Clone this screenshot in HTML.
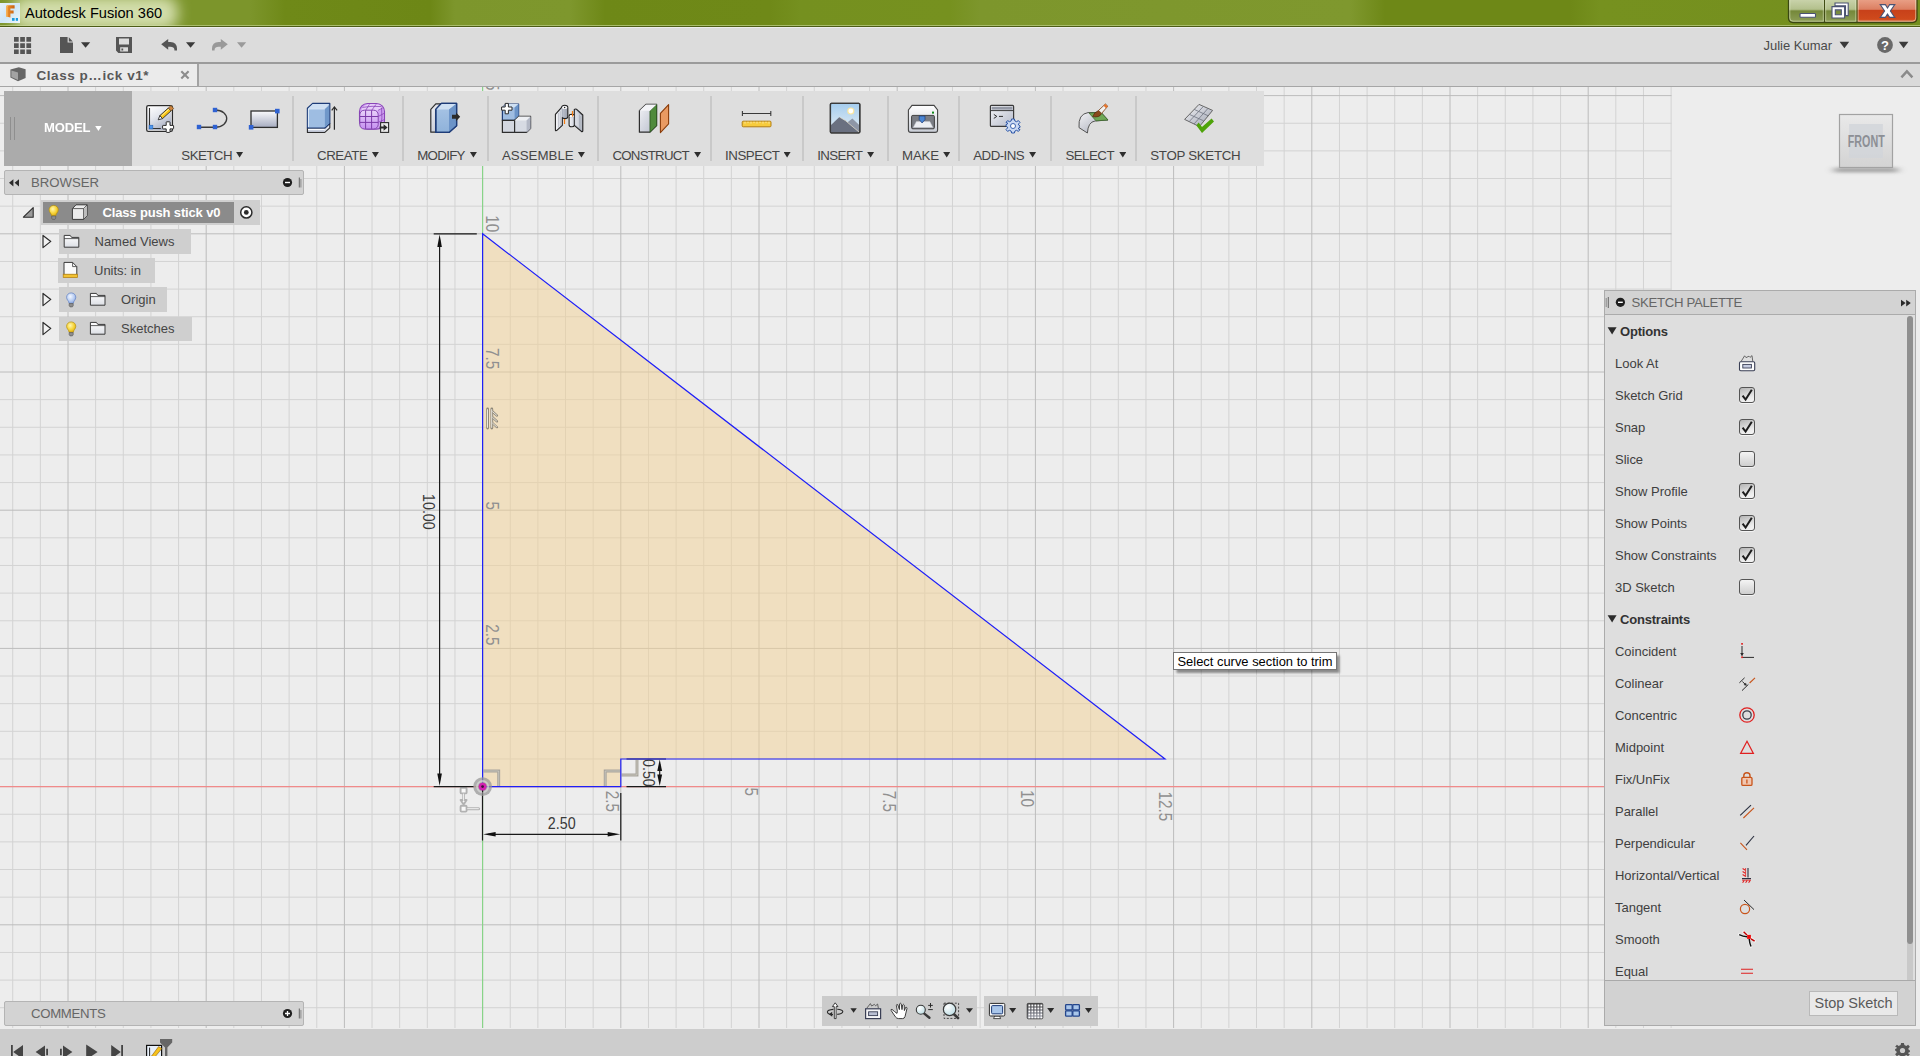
<!DOCTYPE html>
<html lang="en">
<head>
<meta charset="utf-8">
<title>Autodesk Fusion 360</title>
<style>
*{box-sizing:border-box;margin:0;padding:0}
html,body{width:1920px;height:1056px;overflow:hidden;background:#ededed;font-family:"Liberation Sans",Arial,sans-serif;color:#444}
.abs{position:absolute}
#root{position:relative;width:1920px;height:1056px;overflow:hidden}
/* title bar */
#titlebar{left:0;top:0;width:1920px;height:27px;background:#75901d;border-bottom:1px solid #4c5c16;overflow:hidden}
#titlebar .shade{left:0;top:0;width:1920px;height:26px;border-bottom:1px solid #a9bd6c;
 background:linear-gradient(90deg,#7c952b 0px,#7c952b 250px,#6f8918 285px,#6d8716 430px,#7d962c 455px,#7e972d 570px,#6e8817 605px,#6f8918 770px,#75901f 800px,#76911f 950px,#7d962c 980px,#7f982e 1350px,#6e8817 1385px,#6e8817 1570px,#76911f 1600px,#748f1e 1920px)}
#titleglow{left:12px;top:-4px;width:166px;height:34px;background:rgba(214,224,176,.97);filter:blur(7px);border-radius:14px}
#titletext{left:25px;top:3.4px;font-size:14.6px;line-height:20px;color:#000;letter-spacing:0px;white-space:nowrap}
/* quick bar */
#qbar{left:0;top:28px;width:1920px;height:34px;background:#dcdcdc}
#qline{left:0;top:62px;width:1920px;height:2px;background:#9b9b9b}
#tabrow{left:0;top:64px;width:1920px;height:23px;background:#dadada;border-bottom:1px solid #a6a6a6}
#tab{left:0;top:64px;width:199px;height:22px;background:#ebebeb;border-right:2px solid #a3a3a3}
#tabtext{left:36.5px;top:66.5px;font-size:13.5px;line-height:17px;color:#585858;white-space:nowrap;font-weight:bold;letter-spacing:.55px}
.txt{white-space:nowrap;color:#444}
/* toolbar */
#ribbon{left:4px;top:91px;width:1260px;height:75px;background:#dedede}
#modelbtn{left:4px;top:91px;width:128px;height:75px;background:#ababab}
.sep{width:2px;background:#c9c9c9;top:96px;height:65px}
.rlabel{top:147.8px;font-size:13.3px;line-height:15px;color:#454545;white-space:nowrap}
.dd{width:7px;height:5.6px;background:#2e2e2e;clip-path:polygon(0 0,100% 0,50% 100%);margin-left:-.1px}
/* panels */
.phead{background:#d3d3d3;border:1px solid #b4b4b4;border-radius:2px}
.ptitle{font-size:14px;line-height:16px;color:#555;white-space:nowrap}
.bitem{background:#cfcfcf;height:25px}
.btext{font-size:13px;line-height:15px;color:#454545;white-space:nowrap}
/* palette */
#palette{left:1604px;top:290px;width:312px;height:736px;background:#dedede;border:1px solid #ababab}
.prow{left:1615px;font-size:13px;line-height:15px;color:#3f3f3f;white-space:nowrap;letter-spacing:-.02px}
.psec{left:1620px;font-size:13px;line-height:15px;color:#333;font-weight:bold;white-space:nowrap;letter-spacing:-.2px}
.cb.on{background:linear-gradient(160deg,#b4b4b4,#ececec 70%,#f6f6f6)}
.cb{left:1739px;width:16px;height:16px;border:1px solid #555;border-radius:3px;background:linear-gradient(#f4f4f4,#cfcfcf);box-shadow:0 1px 0 #f4f4f4}
svg{position:absolute;overflow:visible}
</style>
</head>
<body>
<div id="root">
<svg class="abs" id="canvas" style="left:0;top:0" width="1920" height="1056" viewBox="0 0 1920 1056" font-family="'Liberation Sans',Arial,sans-serif">
<rect x="0" y="87" width="1920" height="941" fill="#ededed"/>
<path d="M12.72 87 V1028 M40.36 87 V1028 M95.64 87 V1028 M123.28 87 V1028 M150.92 87 V1028 M178.56 87 V1028 M233.84 87 V1028 M261.48 87 V1028 M289.12 87 V1028 M316.76 87 V1028 M372.04 87 V1028 M399.68 87 V1028 M427.32 87 V1028 M454.96 87 V1028 M510.24 87 V1028 M537.88 87 V1028 M565.52 87 V1028 M593.16 87 V1028 M648.44 87 V1028 M676.08 87 V1028 M703.72 87 V1028 M731.36 87 V1028 M786.64 87 V1028 M814.28 87 V1028 M841.92 87 V1028 M869.56 87 V1028 M924.84 87 V1028 M952.48 87 V1028 M980.12 87 V1028 M1007.76 87 V1028 M1063.04 87 V1028 M1090.68 87 V1028 M1118.32 87 V1028 M1145.96 87 V1028 M1201.24 87 V1028 M1228.88 87 V1028 M1256.52 87 V1028 M1284.16 87 V1028 M1339.44 87 V1028 M1367.08 87 V1028 M1394.72 87 V1028 M1422.36 87 V1028 M1477.64 87 V1028 M1505.28 87 V1028 M1532.92 87 V1028 M1560.56 87 V1028 M1615.84 87 V1028 M1643.48 87 V1028 M1671.12 87 V1028 M0 1007.72 H1671.50 M0 980.08 H1671.50 M0 952.44 H1671.50 M0 897.16 H1671.50 M0 869.52 H1671.50 M0 841.88 H1671.50 M0 814.24 H1671.50 M0 758.96 H1671.50 M0 731.32 H1671.50 M0 703.68 H1671.50 M0 676.04 H1671.50 M0 620.76 H1671.50 M0 593.12 H1671.50 M0 565.48 H1671.50 M0 537.84 H1671.50 M0 482.56 H1671.50 M0 454.92 H1671.50 M0 427.28 H1671.50 M0 399.64 H1671.50 M0 344.36 H1671.50 M0 316.72 H1671.50 M0 289.08 H1671.50 M0 261.44 H1671.50 M0 206.16 H1671.50 M0 178.52 H1671.50 M0 150.88 H1671.50 M0 123.24 H1671.50" stroke="#d3d3d3" stroke-width="1" fill="none"/>
<path d="M68.00 87 V1028 M206.20 87 V1028 M344.40 87 V1028 M482.60 87 V1028 M620.80 87 V1028 M759.00 87 V1028 M897.20 87 V1028 M1035.40 87 V1028 M1173.60 87 V1028 M1311.80 87 V1028 M1450.00 87 V1028 M1588.20 87 V1028 M0 924.80 H1671.50 M0 786.60 H1671.50 M0 648.40 H1671.50 M0 510.20 H1671.50 M0 372.00 H1671.50 M0 233.80 H1671.50 M0 95.60 H1671.50" stroke="#bcbcbc" stroke-width="1" fill="none"/>
<path d="M0 786.60 H1605" stroke="#f08a8a" stroke-width="1.1"/>
<path d="M482.60 87 V1028" stroke="#86d686" stroke-width="1.1"/>
<path d="M482.60 233.80 L1165.00 759.00 L620.80 759.00 L620.80 786.60 L482.60 786.60 Z" fill="rgba(243,209,148,0.5)"/>
<text transform="translate(486.30 90.60) rotate(90) scale(1.02 1.2)" text-anchor="end" font-size="15" fill="#909090">12.5</text>
<text transform="translate(486.30 232.20) rotate(90) scale(1.02 1.2)" text-anchor="end" font-size="15" fill="#909090">10</text>
<text transform="translate(486.30 369.20) rotate(90) scale(1.02 1.2)" text-anchor="end" font-size="15" fill="#909090">7.5</text>
<text transform="translate(486.30 510.00) rotate(90) scale(1.02 1.2)" text-anchor="end" font-size="15" fill="#909090">5</text>
<text transform="translate(486.30 645.60) rotate(90) scale(1.02 1.2)" text-anchor="end" font-size="15" fill="#909090">2.5</text>
<text transform="translate(606.30 790.80) rotate(90) scale(1.02 1.2)" text-anchor="start" font-size="15" fill="#909090">2.5</text>
<text transform="translate(745.00 787.60) rotate(90) scale(1.02 1.2)" text-anchor="start" font-size="15" fill="#909090">5</text>
<text transform="translate(883.00 790.80) rotate(90) scale(1.02 1.2)" text-anchor="start" font-size="15" fill="#909090">7.5</text>
<text transform="translate(1021.20 790.00) rotate(90) scale(1.02 1.2)" text-anchor="start" font-size="15" fill="#909090">10</text>
<text transform="translate(1159.30 791.60) rotate(90) scale(1.02 1.2)" text-anchor="start" font-size="15" fill="#909090">12.5</text>
<path d="M483.5 771 H498.7 V786" stroke="#a7a49b" stroke-width="2.9" fill="none" stroke-linejoin="miter"/>
<path d="M483.5 771 H498.7 V786" stroke="#f1eee6" stroke-width="0.6" opacity=".7" fill="none"/>
<path d="M605.2 786 V771 H620.5" stroke="#a7a49b" stroke-width="2.9" fill="none" stroke-linejoin="miter"/>
<path d="M605.2 786 V771 H620.5" stroke="#f1eee6" stroke-width="0.6" opacity=".7" fill="none"/>
<path d="M621.5 775 H637 V760" stroke="#a7a49b" stroke-width="2.9" fill="none" stroke-linejoin="miter"/>
<path d="M621.5 775 H637 V760" stroke="#f1eee6" stroke-width="0.6" opacity=".7" fill="none"/>
<g stroke="#8f8878" stroke-width="2.8" fill="none" stroke-linecap="round"><path d="M487.6 409 V428"/><path d="M491.8 409 V428"/><path d="M492.6 411.6 L497 415.6 M492.6 417.4 L497 421.4 M492.6 423.2 L497 427.2" stroke-width="2.2"/></g>
<g stroke="#f6f3ec" stroke-width="0.9" fill="none" stroke-linecap="round"><path d="M487.5 409.6 V427.4"/><path d="M491.7 409.6 V427.4"/><path d="M492.8 411.8 L496.6 415.2 M492.8 417.6 L496.6 421 M492.8 423.4 L496.6 426.8"/></g>
<g stroke="#b2b2b2" stroke-width="1.9" fill="#f8f8f8" stroke-linejoin="round"><rect x="460.6" y="787.8" width="6" height="5.6" rx="1"/><path d="M463.6 794 V801" fill="none" stroke-width="2.6"/><path d="M460.6 800 L463.6 804.6 L466.6 800 Z"/><rect x="460.6" y="805.8" width="6" height="5.8" rx="1"/><path d="M467.4 808.7 H478.6" fill="none" stroke-width="3" stroke-linecap="round"/></g>
<g stroke="#f8f8f8" stroke-width="0.9" fill="none" stroke-linecap="round"><path d="M463.6 794 V800.4"/><path d="M467.6 808.7 H478.4"/></g>
<g stroke="#1a1a1a" stroke-width="1.2" fill="none">
<path d="M433.7 233.80 H476.8 M433.7 786.60 H474"/>
<path d="M439.6 239.80 V780.60"/>
<path d="M482.5 791 V840.5 M620.80 793 V840.5"/>
<path d="M488 834.3 H615"/>
<path d="M626.5 759.00 H666 M626.5 786.60 H666"/>
<path d="M659.7 764 V781"/>
</g>
<g fill="#111">
<path d="M439.60 234.40 L441.90 246.90 L437.30 246.90 Z"/>
<path d="M439.60 786.00 L437.30 773.50 L441.90 773.50 Z"/>
<path d="M483.10 834.30 L495.60 832.00 L495.60 836.60 Z"/>
<path d="M620.20 834.30 L607.70 836.60 L607.70 832.00 Z"/>
<path d="M659.70 759.50 L662.10 771.00 L657.30 771.00 Z"/>
<path d="M659.70 786.10 L657.30 774.60 L662.10 774.60 Z"/>
</g>
<text transform="translate(422.6 494) rotate(90) scale(.98 1.16)" font-size="14.6" fill="#3a3a3a">10.00</text>
<text transform="translate(547.8 828.6) scale(.98 1.13)" font-size="14.6" fill="#3a3a3a">2.50</text>
<text transform="translate(642.6 759) rotate(90) scale(.98 1.16)" font-size="14.6" fill="#3a3a3a">0.50</text>
<g stroke="#1f1ff8" stroke-width="1.2" fill="none" stroke-linecap="square">
<path d="M482.60 233.80 V786.60 H620.80 V759.00 H1165.00 Z"/>
</g>
<circle cx="482.60" cy="786.60" r="9.4" fill="rgba(150,150,150,.72)"/>
<circle cx="482.60" cy="786.60" r="5.6" fill="none" stroke="rgba(232,232,232,.55)" stroke-width="1.8"/>
<path d="M482.60 789.60 V792.60" stroke="#1a1a1a" stroke-width="1.2"/>
<circle cx="482.60" cy="786.60" r="3.9" fill="#d022b0"/><circle cx="482.60" cy="786.60" r="1.4" fill="#3b1535"/>
<defs><filter id="tsh" x="-10%" y="-40%" width="120%" height="180%"><feGaussianBlur stdDeviation="1.3"/></filter></defs><rect x="1176.5" y="655.5" width="163" height="17.5" fill="rgba(0,0,0,.42)" filter="url(#tsh)"/>
<rect x="1173.5" y="652.5" width="163" height="17" fill="#ffffff" stroke="#767676" stroke-width="1"/>
<text x="1177.5" y="665.6" font-size="12.6" fill="#000" textLength="155" lengthAdjust="spacingAndGlyphs">Select curve section to trim</text>
<defs><filter id="vcb" x="-30%" y="-200%" width="160%" height="500%"><feGaussianBlur stdDeviation="4 1.5"/></filter><linearGradient id="vcface" x1="0" y1="0" x2="0" y2="1"><stop offset="0" stop-color="#e9e9e9"/><stop offset="1" stop-color="#d3d3d3"/></linearGradient></defs>
<rect x="1834" y="167.5" width="64" height="5" fill="#9c9c9c" opacity=".85" filter="url(#vcb)"/>
<rect x="1839.5" y="114.5" width="53" height="53" fill="url(#vcface)" stroke="#a2a2a2" stroke-width="1.2"/>
<rect x="1849.2" y="124" width="33.6" height="34" fill="#d1d4d9" opacity=".8"/>
<text transform="translate(1866.3 146.6) scale(1 1.08)" font-size="14.6" font-weight="bold" fill="#8c8f95" text-anchor="middle" textLength="37" lengthAdjust="spacingAndGlyphs">FRONT</text>
</svg>
<!-- window title bar -->
<div class="abs" id="titlebar">
 <div class="abs shade"></div>
 <div class="abs" id="titleglow"></div>
 <svg style="left:0;top:0" width="24" height="26" viewBox="0 0 24 26">
  <defs><linearGradient id="icbg" x1="0" y1="0" x2="1" y2="1"><stop offset="0" stop-color="#e8f3fb"/><stop offset=".5" stop-color="#cfe6f5"/><stop offset="1" stop-color="#eef7fc"/></linearGradient>
  <linearGradient id="icf" x1="0" y1="0" x2="1" y2="0"><stop offset="0" stop-color="#f0962e"/><stop offset="1" stop-color="#c9600f"/></linearGradient></defs>
  <rect x="0" y="3" width="20" height="20" fill="url(#icbg)"/>
  <path d="M6.2 6.5 Q6.2 5.2 8 5.2 H14.6 V8.6 H10.4 V10.6 H13.6 V13.4 H10.4 V17.6 L6.2 16.6 Z" fill="url(#icf)"/>
  <path d="M6.2 6.5 Q6.2 5.2 8 5.2 L9 5.8 Q7.6 6 7.6 7.4 V17 L6.2 16.6 Z" fill="#f7b45a"/>
  <rect x="12" y="18" width="2.6" height="2.8" fill="#1b9be0"/><rect x="15.8" y="18" width="2.2" height="2.8" fill="#1b9be0"/>
 </svg>
 <div class="abs" id="titletext">Autodesk Fusion 360</div>
 <!-- window controls -->
 <svg style="left:1786px;top:0" width="134" height="26" viewBox="0 0 134 26">
  <defs>
   <linearGradient id="wcg" x1="0" y1="0" x2="0" y2="1"><stop offset="0" stop-color="#cdd6b0"/><stop offset=".45" stop-color="#b3c08c"/><stop offset=".52" stop-color="#75883a"/><stop offset="1" stop-color="#8fa059"/></linearGradient>
   <linearGradient id="wcr" x1="0" y1="0" x2="0" y2="1"><stop offset="0" stop-color="#eba58c"/><stop offset=".45" stop-color="#dc7f62"/><stop offset=".5" stop-color="#c8411a"/><stop offset=".85" stop-color="#cf4a1c"/><stop offset="1" stop-color="#e58a66"/></linearGradient>
   <clipPath id="wcclip"><path d="M2.5 -2 H131 V18 Q131 22.5 126.5 22.5 H7 Q2.5 22.5 2.5 18 Z"/></clipPath>
  </defs>
  <g clip-path="url(#wcclip)">
   <rect x="2" y="-2" width="36.5" height="25" fill="url(#wcg)"/>
   <rect x="38.5" y="-2" width="32.5" height="25" fill="url(#wcg)"/>
   <rect x="71" y="-2" width="60" height="25" fill="url(#wcr)"/>
  </g>
  <path d="M2.5 -2 H131 V18 Q131 22.5 126.5 22.5 H7 Q2.5 22.5 2.5 18 Z" fill="none" stroke="#3a4712" stroke-width="1.3"/>
  <path d="M3.8 -2 V18 Q3.8 21.2 7 21.2 H126.5 Q129.7 21.2 129.7 18 V-2" fill="none" stroke="rgba(235,242,210,.55)" stroke-width="1"/>
  <path d="M38.5 0 V22 M71 0 V22" stroke="#3f4c14" stroke-width="1.2"/>
  <path d="M39.7 0 V21 M37.3 0 V21 M69.8 0 V21 M72.2 0 V21" stroke="rgba(235,242,210,.5)" stroke-width="1"/>
  <rect x="14" y="13.5" width="15.5" height="3.8" rx=".8" fill="#fff" stroke="#4a5273" stroke-width="1.1"/>
  <path d="M49 3 H62.2 V15.6 H59.5 V5.7 H49 Z" fill="#fff" stroke="#4a5273" stroke-width="1.1"/>
  <path d="M46 6.6 H58.6 V18 H46 Z M49.3 9.9 V14.8 H55.3 V9.9 Z" fill="#fff" fill-rule="evenodd" stroke="#4a5273" stroke-width="1.1"/>
  <path d="M94.2 4.6 H99.4 L101.5 8 L103.6 4.6 H108.8 L104.4 11 L108.8 17.4 H103.6 L101.5 14 L99.4 17.4 H94.2 L98.6 11 Z" fill="#fff" stroke="#4a5273" stroke-width="1.1"/>
 </svg>
</div>
<!-- quick access bar -->
<div class="abs" id="qbar"></div>
<div class="abs" id="qline"></div>
<div class="abs" id="tabrow"></div>
<div class="abs" id="tab"></div>
<svg style="left:0;top:28px" width="260" height="34" viewBox="0 28 260 34">
 <g fill="#555">
  <path d="M14 37h4.7v4.7H14zM20.2 37h4.7v4.7h-4.7zM26.4 37h4.7v4.7h-4.7zM14 43.2h4.7v4.7H14zM20.2 43.2h4.7v4.7h-4.7zM26.4 43.2h4.7v4.7h-4.7zM14 49.4h4.7v4.7H14zM20.2 49.4h4.7v4.7h-4.7zM26.4 49.4h4.7v4.7h-4.7z"/>
  <path d="M60 37 H67.6 V42.6 H73 V53 H60 Z M68.8 37.2 L72.8 41.4 H68.8 Z"/>
  <path d="M116 37 H132 V53 H118.4 L116 50.6 Z M119 38.6 V44.4 H129 V38.6 Z M120.2 47.2 V51.4 H128 V47.2 Z M121.4 48.4 H123.2 V50.4 H121.4 Z" fill-rule="evenodd"/>
  <path d="M161.2 44.3 L168.2 38.9 V41.9 H170.4 Q176.9 42.1 177 48.6 V50.6 Q175.6 50.2 174.4 50.6 V49.4 Q174 46.7 170.4 46.7 H168.2 V49.7 Z"/>
 </g>
 <path d="M227.8 44.3 L220.8 38.9 V41.9 H218.6 Q212.1 42.1 212 48.6 V50.6 Q213.4 50.2 214.6 50.6 V49.4 Q215 46.7 218.6 46.7 H220.8 V49.7 Z" fill="#999"/>
 <g fill="#3a3a3a"><path d="M81 42.2 H90.2 L85.6 47.8 Z"/><path d="M186 42.2 H195.2 L190.6 47.8 Z"/></g>
 <path d="M237 42.2 H246.2 L241.6 47.8 Z" fill="#9a9a9a"/>
</svg>
<div class="abs txt" style="left:1763.5px;top:38px;font-size:13px;line-height:15px;color:#4a4a4a">Julie Kumar</div>
<svg style="left:1830px;top:28px" width="90" height="60" viewBox="1830 28 90 60">
 <g fill="#3a3a3a"><path d="M1839.6 41.8 H1849.2 L1844.4 48.2 Z"/><path d="M1898.8 41.8 H1908.4 L1903.6 48.2 Z"/></g>
 <circle cx="1885" cy="45" r="7.9" fill="#696969"/>
 <text x="1885" y="49.6" font-size="13" font-weight="bold" fill="#fff" text-anchor="middle" font-family="'Liberation Sans',Arial,sans-serif">?</text>
 <path d="M1901.4 77.4 L1906.9 71.4 L1912.4 77.4" fill="none" stroke="#8a8a8a" stroke-width="2.4"/>
</svg>
<!-- document tab -->
<svg style="left:8px;top:66px" width="22" height="18" viewBox="8 66 22 18">
 <path d="M10.4 69.6 L18.8 67.2 L25.6 69.2 V78 L18 81.2 L10.4 77.6 Z" fill="#666"/>
 <path d="M11.4 70.6 L18 72.4 V80 L11.4 77 Z" fill="#a3a3a3"/>
</svg>
<div class="abs" id="tabtext">Class p…ick v1*</div>
<svg style="left:179px;top:69px" width="12" height="12" viewBox="0 0 12 12"><path d="M2.3 2.2 L9.6 9.6 M9.6 2.2 L2.3 9.6" stroke="#8c8c8c" stroke-width="2.1"/></svg>
<!-- ribbon toolbar -->
<div class="abs" id="ribbon"></div>
<div class="abs" id="modelbtn"></div>
<div class="abs" style="left:10px;top:117px;width:1px;height:23px;background:#8f8f8f"></div>
<div class="abs" style="left:14px;top:117px;width:1px;height:23px;background:#8f8f8f"></div>
<div class="abs txt" id="modeltxt" style="left:43.5px;top:120px;font-size:13.4px;line-height:16px;color:#fff;font-weight:bold;letter-spacing:-.15px;transform:scaleX(.975);transform-origin:0 0">MODEL</div>
<div class="abs" style="left:95px;top:125.7px;width:6.8px;height:5.2px;background:#fff;clip-path:polygon(0 0,100% 0,50% 100%)"></div>
<div class="abs sep" style="left:292px"></div>
<div class="abs sep" style="left:402px"></div>
<div class="abs sep" style="left:487px"></div>
<div class="abs sep" style="left:597px"></div>
<div class="abs sep" style="left:710px"></div>
<div class="abs sep" style="left:802px"></div>
<div class="abs sep" style="left:887px"></div>
<div class="abs sep" style="left:958px"></div>
<div class="abs sep" style="left:1050px"></div>
<div class="abs sep" style="left:1135px"></div>
<div class="abs rlabel" style="left:181.3px;letter-spacing:-0.54px">SKETCH</div><div class="abs dd" style="left:236.2px;top:152px"></div>
<div class="abs rlabel" style="left:317.0px;letter-spacing:-0.44px">CREATE</div><div class="abs dd" style="left:372.0px;top:152px"></div>
<div class="abs rlabel" style="left:417.2px;letter-spacing:-0.69px">MODIFY</div><div class="abs dd" style="left:470.0px;top:152px"></div>
<div class="abs rlabel" style="left:502.0px;letter-spacing:0.00px">ASSEMBLE</div><div class="abs dd" style="left:578.0px;top:152px"></div>
<div class="abs rlabel" style="left:612.5px;letter-spacing:-0.79px">CONSTRUCT</div><div class="abs dd" style="left:694.2px;top:152px"></div>
<div class="abs rlabel" style="left:725.0px;letter-spacing:-0.44px">INSPECT</div><div class="abs dd" style="left:783.7px;top:152px"></div>
<div class="abs rlabel" style="left:817.2px;letter-spacing:-0.58px">INSERT</div><div class="abs dd" style="left:867.2px;top:152px"></div>
<div class="abs rlabel" style="left:902.0px;letter-spacing:-0.18px">MAKE</div><div class="abs dd" style="left:943.3px;top:152px"></div>
<div class="abs rlabel" style="left:973.3px;letter-spacing:-0.55px">ADD-INS</div><div class="abs dd" style="left:1029.2px;top:152px"></div>
<div class="abs rlabel" style="left:1065.4px;letter-spacing:-0.51px">SELECT</div><div class="abs dd" style="left:1119.4px;top:152px"></div>
<div class="abs rlabel" style="left:1150.3px;letter-spacing:-0.30px">STOP SKETCH</div>
<svg id="ticons" style="left:0;top:91px" width="1270" height="60" viewBox="0 91 1270 60">
 <defs>
  <linearGradient id="gsk" x1="0" y1="0" x2=".6" y2="1"><stop offset="0" stop-color="#ffffff"/><stop offset=".45" stop-color="#e4e7ee"/><stop offset="1" stop-color="#aab0c4"/></linearGradient>
  <linearGradient id="grc" x1="0" y1="0" x2="0" y2="1"><stop offset="0" stop-color="#fbfbfd"/><stop offset="1" stop-color="#a6acc0"/></linearGradient>
  <linearGradient id="gbl" x1="0" y1="0" x2="0" y2="1"><stop offset="0" stop-color="#a9c5e6"/><stop offset="1" stop-color="#8fb2da"/></linearGradient>
  <linearGradient id="ggy" x1="0" y1="0" x2="1" y2="1"><stop offset="0" stop-color="#f2f3f6"/><stop offset="1" stop-color="#b7bccb"/></linearGradient>
  <linearGradient id="gpu" x1="0" y1="0" x2="0" y2="1"><stop offset="0" stop-color="#e9d3fa"/><stop offset="1" stop-color="#c58ff0"/></linearGradient>
  <linearGradient id="gsky" x1="0" y1="0" x2="0" y2="1"><stop offset="0" stop-color="#a5cdee"/><stop offset="1" stop-color="#e6eef4"/></linearGradient>
  <linearGradient id="gpr" x1="0" y1="0" x2="0" y2="1"><stop offset="0" stop-color="#ffffff"/><stop offset="1" stop-color="#c9cdd6"/></linearGradient>
  <linearGradient id="gjn" x1="0" y1="0" x2="1" y2="0"><stop offset="0" stop-color="#f4f5f8"/><stop offset=".5" stop-color="#c3c8d3"/><stop offset="1" stop-color="#9aa0ae"/></linearGradient>
  <linearGradient id="gpl" x1="0" y1="0" x2="1" y2="1"><stop offset="0" stop-color="#f4f4f6"/><stop offset="1" stop-color="#9ea3b2"/></linearGradient>
 </defs>
 <!-- create sketch -->
 <rect x="146.7" y="105.7" width="25.7" height="25.7" rx="1.6" fill="#fff" stroke="#2b2b2b" stroke-width="1.3"/>
 <rect x="148" y="107" width="23.1" height="23.1" fill="url(#gsk)"/>
 <path d="M149.5 108 V128.5 H160.8" fill="none" stroke="#333" stroke-width="1.1"/>
 <rect x="149.2" y="125.3" width="3.6" height="3.6" fill="#4d97f0" stroke="#2d6cc0" stroke-width=".7"/>
 <path d="M159.83 115.63 L168.38 107.93 L171.06 110.9 L162.51 118.61 Z" fill="#f9c413" stroke="#2b2b2b" stroke-width=".9" stroke-linejoin="round"/>
 <path d="M161.3 116 L169.4 108.7" stroke="#fff1a0" stroke-width="1"/>
 <path d="M168.38 107.93 L170.98 105.58 L173.66 108.56 L171.06 110.9 Z" fill="#cd8540" stroke="#6b4a1e" stroke-width=".7" stroke-linejoin="round"/>
 <path d="M159.83 115.63 L158.2 119.8 L162.51 118.61 Z" fill="#fff" stroke="#2b2b2b" stroke-width=".9" stroke-linejoin="round"/>
 <path d="M166.7 121.8 H169.5 Q170 121.8 170 122.3 V125.4 H173 Q173.6 125.4 173.6 125.9 V128.4 Q173.6 128.9 173 128.9 H170 V131.8 Q170 132.4 169.5 132.4 H166.7 Q166.2 132.4 166.2 131.8 V128.9 H163.2 Q162.6 128.9 162.6 128.4 V125.9 Q162.6 125.4 163.2 125.4 H166.2 V122.3 Q166.2 121.8 166.7 121.8 Z" fill="#fff" stroke="#2b2b2b" stroke-width="1"/>
 <!-- line / arc -->
 <path d="M199 127.2 H215 C230.6 127.2 230.6 110 215 110" fill="none" stroke="#3a3a3a" stroke-width="1.35"/>
 <g fill="#2f62d2"><rect x="196.8" y="124.8" width="4.4" height="4.4"/><rect x="212.8" y="124.8" width="4.4" height="4.4"/><rect x="212.8" y="107.8" width="4.4" height="4.4"/></g>
 <!-- rectangle -->
 <rect x="251" y="111" width="26.4" height="16.4" fill="url(#grc)" stroke="#2e2e2e" stroke-width="1.3"/>
 <g fill="#2f62d2"><rect x="248.8" y="125" width="4.6" height="4.6"/><rect x="275" y="108.8" width="4.6" height="4.6"/></g>
 <!-- extrude -->
 <path d="M307.4 128 H324.8 L329.8 123.4 V127.8 L324.8 132.4 H307.4 Z" fill="#dfe3ec" stroke="#2b2b2b" stroke-width="1.1" stroke-linejoin="round"/>
 <path d="M308 129.4 H324.6" stroke="#fff" stroke-width="1"/><path d="M308 131 H324.4" stroke="#c3c9da" stroke-width="1.4"/>
 <path d="M307.4 108.2 L312.6 103.4 H329.8 V123.4 L324.8 128 H307.4 Z" fill="#9ebde2" stroke="#1e3c78" stroke-width="1.2" stroke-linejoin="round"/>
 <path d="M308.2 108.4 L312.9 104.1 H329 L324.6 108.4 Z" fill="#cfe0f3"/>
 <path d="M324.9 108.6 L329.2 104.6 V123.2 L324.9 127.2 Z" fill="#6f97c9"/>
 <path d="M308.4 127 V108.9 H324.4 L328.6 105" fill="none" stroke="#eaf2fb" stroke-width=".9"/>
 <path d="M334.4 129.8 V108" stroke="#2b2b2b" stroke-width="1.2"/><path d="M331.7 110.4 L334.4 107 L337.1 110.4" fill="none" stroke="#2b2b2b" stroke-width="1.2"/>
 <!-- form -->
 <rect x="359.5" y="103.5" width="25" height="25.6" rx="8" fill="#cfa0f2" stroke="#8a45b8" stroke-width="1.1"/>
 <path d="M361.2 110.4 Q363 104.4 371 104 Q380 103.8 383.2 107.4 Q380.4 110 378 110.4 Z" fill="#e6cdf9"/>
 <rect x="359.8" y="110.2" width="18.4" height="18.8" rx="4.5" fill="url(#gpu)" stroke="#7b3aa8" stroke-width=".9"/>
 <path d="M365.6 110.4 V128.8 M371.6 110.4 V128.8 M360 116.5 H378 M360 122.4 H378" stroke="#7b3aa8" stroke-width="1"/>
 <path d="M365.6 110.4 L369.4 104.4 M371.6 110.4 L376 104.4 M362.4 107.4 Q372 105.6 381.6 106.6 M378.2 116.5 L384 113.4 M378.2 122.4 L384.2 119.6 M378 110.4 Q381.6 108.6 383.2 107.4 M381.6 107.6 Q382.6 118 380.8 127.4" fill="none" stroke="#8a45b8" stroke-width=".8"/>
 <rect x="380.6" y="122.6" width="8" height="9.8" fill="#ececec" stroke="#2b2b2b" stroke-width="1.1"/>
 <path d="M379.6 126.6 H383.6 V124.2 L387.6 127.5 L383.6 130.8 V128.4 H379.6 Z" fill="#2b2b2b"/>
 <!-- modify press pull -->
 <path d="M430.8 109.4 L435.8 103.8 H441 L436.2 109.4 V132.2 H430.8 Z" fill="url(#ggy)" stroke="#2e2e2e" stroke-width="1.2" stroke-linejoin="round"/>
 <path d="M435.8 109.4 L441.4 103.4 H456.6 V125.8 L449 132.4 H435.8 Z" fill="url(#gbl)" stroke="#1e3c78" stroke-width="1.3" stroke-linejoin="round"/>
 <path d="M435.8 109.4 L441.4 103.4 H456.6 L449 109.4 Z" fill="#cfe0f3"/>
 <path d="M449 109.4 L456.6 103.4 V125.8 L449 132.4 Z" fill="#6c94c8"/>
 <path d="M435.8 109.4 L441.4 103.4 H456.6 V125.8 L449 132.4 H435.8 Z" fill="none" stroke="#1e3c78" stroke-width="1.3" stroke-linejoin="round"/>
 <path d="M452 114.8 H456 V112.4 L460.2 116.8 L456 121.2 V118.8 H452 Z" fill="#2b2b2b"/>
 <!-- assemble: new component -->
 <path d="M502.4 107.6 L506 104 H518.6 V116.4 L514.6 120.4 H502.4 Z" fill="#9fbde2" stroke="#1e3c78" stroke-width="1.2" stroke-linejoin="round"/>
 <path d="M502.4 107.6 L506 104 H518.6 L514.6 107.6 Z" fill="#cfe0f3"/><path d="M514.6 107.6 L518.6 104 V116.4 L514.6 120.4 Z" fill="#6c94c8"/>
 <path d="M502.4 120.4 H514.6 V132.4 H502.4 Z" fill="#d3d7e0" stroke="#2e2e2e" stroke-width="1.2"/>
 <path d="M514.6 120.4 L518.8 116.4 H530.6 V128.4 L526.6 132.4 H514.6 Z" fill="#d6dae3" stroke="#2e2e2e" stroke-width="1.2" stroke-linejoin="round"/>
 <path d="M514.6 120.4 L518.8 116.4 H530.6 L526.6 120.4 Z" fill="#eef0f4"/><path d="M526.6 120.4 L530.6 116.4 V128.4 L526.6 132.4 Z" fill="#b3b8c6"/>
 <path d="M505.2 103.4 H508.4 V107 H512 V110.2 H508.4 V113.8 H505.2 V110.2 H501.6 V107 H505.2 Z" fill="#fff" stroke="#2b2b2b" stroke-width="1"/>
 <!-- assemble: joint -->
 <path d="M555.4 130 V114.4 L561.6 107.4 Q561.8 105.2 564.7 105.2 Q567.8 105.2 567.8 107.4 V116.8 Q567.8 118.6 565 118.6 Q562.8 118.6 562.3 117.6 V125.4 L556.6 130.6 Q555.4 131 555.4 130 Z" fill="url(#gjn)" stroke="#222" stroke-width="1.1" stroke-linejoin="round"/>
 <path d="M556.3 115 L561.6 109 V125 L556.3 129.6 Z" fill="#fff" opacity=".45"/>
 <path d="M558.4 113 V127.6 M560.2 111.2 V126" stroke="#9097a6" stroke-width=".7" opacity=".7"/>
 <path d="M562.3 117.4 V108.6" stroke="#8a90a0" stroke-width=".7" opacity=".6"/>
 <ellipse cx="564.7" cy="107.4" rx="2.6" ry="1.5" fill="#fff"/><circle cx="564.6" cy="107.4" r=".75" fill="#222"/>
 <path d="M564.5 119 V124" stroke="#f57c12" stroke-width="1.2"/>
 <path d="M574.3 109.4 Q575.4 108.6 576.4 109.2 L582.8 115 V131 Q582.6 131.8 581.6 131.6 L574.3 125.4 Q574 126.8 571.7 126.8 Q569.1 126.8 569.1 125 V116.2 Q569.1 114.4 571.7 114.4 Q573.6 114.4 574.3 115.2 Z" fill="url(#gjn)" stroke="#222" stroke-width="1.1" stroke-linejoin="round"/>
 <path d="M575.4 110.2 L581.8 116 V130.2 L575.4 124.6 Z" fill="#fff" opacity=".4"/>
 <path d="M579.4 114.6 V128.4 M580.8 116 V129.6" stroke="#8a90a0" stroke-width=".7" opacity=".7"/>
 <path d="M574.3 115.2 V125.4" stroke="#222" stroke-width="1"/><path d="M569.6 116.6 Q571.7 118.4 574 116.6" fill="none" stroke="#8a90a0" stroke-width=".6"/>
 <ellipse cx="571.7" cy="116.2" rx="2.1" ry="1.2" fill="#fff"/>
 <path d="M572.5 111 V116.6" stroke="#f57c12" stroke-width="1.2"/>
 <!-- construct -->
 <path d="M639.4 110.8 L646 104.4 H656.6 V125.6 L650 132.2 H639.4 Z" fill="url(#ggy)" stroke="#2e2e2e" stroke-width="1.2" stroke-linejoin="round"/>
 <path d="M650 110.8 L656.6 104.4 V125.6 L650 132.2 Z" fill="#4f8a3c" stroke="#2f5a22" stroke-width=".9"/>
 <path d="M639.4 110.8 L646 104.4 H656.6 L650 110.8 Z" fill="#f4f5f8"/>
 <path d="M660.4 113.4 L668.6 104.6 V123.8 L660.4 132.6 Z" fill="#e99a62" stroke="#8a3c0a" stroke-width="1.1" stroke-linejoin="round"/>
 <!-- inspect -->
 <path d="M742.4 113.5 H770.8 M742.4 111 V116 M770.8 111 V116" stroke="#3a3a3a" stroke-width="1.1" fill="none"/>
 <rect x="742.2" y="121.2" width="28.8" height="5.6" rx="1" fill="#f7cb3c" stroke="#b37d12" stroke-width="1"/>
 <path d="M745 121.6v2M748 121.6v1.4M751 121.6v2M754 121.6v1.4M757 121.6v2M760 121.6v1.4M763 121.6v2M766 121.6v1.4M769 121.6v2" stroke="#fbe9a8" stroke-width=".9"/>
 <!-- insert -->
 <rect x="830.4" y="103.4" width="29.4" height="29.4" rx="1" fill="url(#gsky)" stroke="#3a3a3a" stroke-width="1.3"/>
 <circle cx="850.8" cy="111" r="3.6" fill="#fbe7a0"/><circle cx="850.8" cy="111" r="2.4" fill="#fff"/>
 <path d="M846 123.6 L852.4 118.6 L859.2 125 V132.2 H846 Z" fill="#8e96a6"/>
 <path d="M831 125 L839.4 117 L845.4 120.6 L859.2 132.2 H831 Z" fill="#6a7080"/>
 <path d="M839.4 117 L845.4 120.6 L859.2 132.2" fill="none" stroke="#e9e3cf" stroke-width=".7"/>
 <rect x="830.4" y="103.4" width="29.4" height="29.4" rx="1" fill="none" stroke="#3a3a3a" stroke-width="1.3"/>
 <!-- make -->
 <path d="M908.4 110 L912 105.4 H934 L937.6 110 V130 Q937.6 132.4 935 132.4 H911 Q908.4 132.4 908.4 130 Z" fill="url(#gpr)" stroke="#444" stroke-width="1.1"/>
 <rect x="911.6" y="115.4" width="22.8" height="13.4" rx="1.2" fill="#7a7d84" stroke="#333" stroke-width=".9"/>
 <path d="M916.4 121.6 H929.8 L933 127.6 H913.2 Z" fill="#eceef2" stroke="#c2c6cf" stroke-width=".5"/>
 <path d="M919.2 116 H925 V119.6 L922.1 123 L919.2 119.6 Z" fill="#4a86d4" stroke="#1e3c78" stroke-width=".7"/>
 <rect x="932" y="111.6" width="2" height="2" fill="#118a1c"/>
 <!-- add-ins -->
 <rect x="990.4" y="105.4" width="23.2" height="21" rx="1" fill="url(#ggy)" stroke="#3a3a3a" stroke-width="1.2"/>
 <rect x="991.6" y="106.8" width="20.8" height="2.8" fill="#9499a6"/>
 <path d="M990.4 110.6 H1013.6" stroke="#3a3a3a" stroke-width="1"/>
 <path d="M993.8 114.4 L996.8 116.4 L993.8 118.4 M999 116.4 H1003" fill="none" stroke="#2e2e2e" stroke-width="1"/>
 <g transform="translate(1013 126)"><path d="M-1.4 -7 H1.4 L1.9 -5 L3.6 -4.3 L5.4 -5.4 L7 -3.6 L5.4 -1.9 L5.7 -.9 L7 0 V1.4 L5.7 1.9 L5.4 3 L7 3.6 L5.4 5.4 L3.6 4.3 L1.9 5 L1.4 7 H-1.4 L-1.9 5 L-3.6 4.3 L-5.4 5.4 L-7 3.6 L-5.4 1.9 L-5.7 .9 L-7 0 V-1.4 L-5.7 -1.9 L-5.4 -3 L-7 -3.6 L-5.4 -5.4 L-3.6 -4.3 L-1.9 -5 Z" fill="#c9d8f2" stroke="#2c56a8" stroke-width="1"/><circle r="2.5" fill="#fff" stroke="#2c56a8" stroke-width=".9"/></g>
 <!-- select -->
 <path d="M1079 127.6 Q1078 114 1088 112.6 L1101 112.4 L1108 120 L1095 121 Q1088 122 1087.4 133 Z" fill="url(#gpl)" stroke="#555" stroke-width="1"/>
 <path d="M1089 113 L1101 112.4 L1108 120 L1096 120.8 Z" fill="#6fa857" stroke="#3d6b2c" stroke-width=".8"/>
 <path d="M1092.6 116.6 Q1094 112.4 1098.6 110.4 L1101.6 113.4 Q1099.6 118 1092.6 116.6 Z" fill="#8a4a1c" stroke="#4a2408" stroke-width=".6"/>
 <path d="M1098.6 110.4 L1105.4 104 L1107.8 106.2 L1101.6 113.4 Z" fill="#f3f3f3" stroke="#7a3b0e" stroke-width=".8"/>
 <path d="M1103.6 105.8 L1105.4 104 L1107.8 106.2 L1106 108.2 Z" fill="#e8742a"/>
 <!-- stop sketch -->
 <path d="M1184.6 119.4 L1199 104.4 L1212.6 110.4 L1199.4 126.6 Z" fill="url(#gpl)" stroke="#666" stroke-width="1"/>
 <path d="M1189.4 114.4 L1203.6 120.8 M1194.2 109.4 L1208.2 115.8 M1189.2 121.6 L1203.4 106.4 M1194 124 L1208 108.4" stroke="#6e7380" stroke-width=".8" fill="none"/>
 <path d="M1196.4 125.4 L1198.6 122.6 L1202 127 L1211.6 118.6 L1214 121.4 L1202 133 Z" fill="#4ea30a"/>
</svg>
<!-- browser panel -->
<div class="abs phead" style="left:4px;top:170px;width:300px;height:24.5px"></div>
<div class="abs ptitle" style="left:31px;top:175px;font-size:13.2px;color:#666">BROWSER</div>
<div class="abs bitem" style="left:41px;top:200px;width:219px;height:24.5px"></div>
<div class="abs" style="left:43px;top:202.3px;width:191px;height:20.4px;background:#8b8b8b"></div>
<div class="abs btext" style="left:102.5px;top:205px;color:#fff;font-weight:bold;letter-spacing:-.15px">Class push stick v0</div>
<div class="abs bitem" style="left:59px;top:229px;width:132px;height:24.5px"></div>
<div class="abs btext" style="left:94.5px;top:234px">Named Views</div>
<div class="abs bitem" style="left:58px;top:258px;width:96.5px;height:24.5px"></div>
<div class="abs btext" style="left:94px;top:263px">Units: in</div>
<div class="abs bitem" style="left:59px;top:287px;width:108px;height:24.5px"></div>
<div class="abs btext" style="left:121px;top:292px">Origin</div>
<div class="abs bitem" style="left:59px;top:316.5px;width:133px;height:24.5px"></div>
<div class="abs btext" style="left:121px;top:321px">Sketches</div>
<svg id="bicons" style="left:0;top:170px" width="310" height="180" viewBox="0 170 310 180">
 <defs>
  <radialGradient id="by" cx=".4" cy=".35" r=".7"><stop offset="0" stop-color="#fff7b0"/><stop offset=".6" stop-color="#f6d235"/><stop offset="1" stop-color="#d9a80e"/></radialGradient>
  <radialGradient id="bb" cx=".4" cy=".35" r=".7"><stop offset="0" stop-color="#f2f7ff"/><stop offset=".6" stop-color="#b9cdf2"/><stop offset="1" stop-color="#8aa6dc"/></radialGradient>
  <linearGradient id="fold" x1="0" y1="0" x2="0" y2="1"><stop offset="0" stop-color="#ffffff"/><stop offset="1" stop-color="#dcdfe5"/></linearGradient>
 </defs>
 <!-- header icons -->
 <path d="M13.4 179.2 V186.4 L9 182.8 Z M19 179.2 V186.4 L14.6 182.8 Z" fill="#2b2b2b"/>
 <circle cx="287.5" cy="182.5" r="4.6" fill="#1f1f1f"/><path d="M285 182.5 H290" stroke="#fff" stroke-width="1.4"/>
 <path d="M299.3 177.5 V187.5" stroke="#666" stroke-width="1"/><path d="M300.9 179 V187.5" stroke="#8a8a8a" stroke-width="1"/>
 <!-- expand arrows -->
 <path d="M33.2 207.6 V217.2 H23.4 Z" fill="#9a9a9a" stroke="#2b2b2b" stroke-width="1.1" stroke-linejoin="round"/>
 <g fill="#f2f2f2" stroke="#2b2b2b" stroke-width="1.2" stroke-linejoin="round"><path d="M43 235.4 L50.8 241.4 L43 247.6 Z"/><path d="M43 293.4 L50.8 299.4 L43 305.6 Z"/><path d="M43 322.4 L50.8 328.4 L43 334.6 Z"/></g>
 <!-- bulbs -->
 <g id="bulb1"><path d="M53.7 205.4 C56.6 205.4 58.3 207.6 58.3 209.8 C58.3 212.4 56 213.4 55.8 215.8 H51.6 C51.4 213.4 49.1 212.4 49.1 209.8 C49.1 207.6 50.8 205.4 53.7 205.4 Z" fill="url(#by)" stroke="#b8900c" stroke-width=".7"/><path d="M51.7 216 H55.7 V218.2 L54.9 219.4 H52.5 L51.7 218.2 Z" fill="#8d8d8d" stroke="#555" stroke-width=".6"/></g>
 <g transform="translate(17.5 116.5)"><path d="M53.7 205.4 C56.6 205.4 58.3 207.6 58.3 209.8 C58.3 212.4 56 213.4 55.8 215.8 H51.6 C51.4 213.4 49.1 212.4 49.1 209.8 C49.1 207.6 50.8 205.4 53.7 205.4 Z" fill="url(#by)" stroke="#b8900c" stroke-width=".7"/><path d="M51.7 216 H55.7 V218.2 L54.9 219.4 H52.5 L51.7 218.2 Z" fill="#8d8d8d" stroke="#555" stroke-width=".6"/></g>
 <g transform="translate(17.5 87.5)"><path d="M53.7 205.4 C56.6 205.4 58.3 207.6 58.3 209.8 C58.3 212.4 56 213.4 55.8 215.8 H51.6 C51.4 213.4 49.1 212.4 49.1 209.8 C49.1 207.6 50.8 205.4 53.7 205.4 Z" fill="url(#bb)" stroke="#5d7fc4" stroke-width=".7"/><path d="M51.7 216 H55.7 V218.2 L54.9 219.4 H52.5 L51.7 218.2 Z" fill="#8d8d8d" stroke="#555" stroke-width=".6"/></g>
 <!-- component cube -->
 <path d="M72.4 208.6 L76 204.8 H87.2 V215.6 L83.6 219.4 H72.4 Z" fill="#ececec" stroke="#3a3a3a" stroke-width="1" stroke-linejoin="round"/>
 <path d="M72.4 208.6 H83.6 V219.4 M83.6 208.6 L87.2 204.8" fill="none" stroke="#3a3a3a" stroke-width=".8"/>
 <path d="M84 209 L86.8 206 V215.4 L84 218.4 Z" fill="#bdbdbd"/>
 <!-- radio -->
 <circle cx="246.3" cy="212.4" r="5.6" fill="#fff" stroke="#2b2b2b" stroke-width="1.5"/><circle cx="246.3" cy="212.4" r="2.4" fill="#2b2b2b"/>
 <!-- folders -->
 <g fill="url(#fold)" stroke="#3a3a3a" stroke-width="1" stroke-linejoin="round">
  <path d="M64.2 235.4 H70.2 L71.6 237.4 H78.8 V247.2 H64.2 Z"/><path d="M64.2 238.6 H78.8" fill="none" stroke-width=".8"/>
  <path d="M90.4 293.4 H96.4 L97.8 295.4 H105 V305.2 H90.4 Z"/><path d="M90.4 296.6 H105" fill="none" stroke-width=".8"/>
  <path d="M90.4 322.4 H96.4 L97.8 324.4 H105 V334.2 H90.4 Z"/><path d="M90.4 325.6 H105" fill="none" stroke-width=".8"/>
 </g>
 <!-- units doc -->
 <path d="M64 262.4 H72.6 L76.8 266.6 V275 H64 Z" fill="#fafafa" stroke="#3a3a3a" stroke-width="1" stroke-linejoin="round"/>
 <path d="M72.6 262.4 V266.6 H76.8" fill="none" stroke="#3a3a3a" stroke-width=".8"/>
 <rect x="63.2" y="274.2" width="14.4" height="3.4" fill="#f2c232" stroke="#b07c10" stroke-width=".7"/>
</svg>
<!-- comments panel -->
<div class="abs phead" style="left:4px;top:1001px;width:300px;height:24.5px"></div>
<div class="abs ptitle" style="left:31px;top:1006px;font-size:13.2px;color:#666;letter-spacing:-.32px">COMMENTS</div>
<svg style="left:280px;top:1003px" width="26" height="20" viewBox="280 1003 26 20">
 <circle cx="287.5" cy="1013.5" r="4.6" fill="#1f1f1f"/><path d="M285 1013.5 H290 M287.5 1011 V1016" stroke="#fff" stroke-width="1.3"/>
 <path d="M299.3 1008.5 V1018.5" stroke="#666" stroke-width="1"/><path d="M300.9 1010 V1018.5" stroke="#8a8a8a" stroke-width="1"/>
</svg>
<!-- sketch palette -->
<div class="abs" id="palette"></div>
<div class="abs" style="left:1604px;top:290px;width:312px;height:25px;background:#d3d3d3;border:1px solid #ababab"></div>
<div class="abs" style="left:1605px;top:980px;width:310px;height:45px;background:#d2d2d2;border-top:1px solid #a9a9a9"></div>
<div class="abs ptitle" style="left:1631.5px;top:295px;font-size:13.2px;line-height:16px;color:#666;letter-spacing:-.3px">SKETCH PALETTE</div>
<div class="abs" style="left:1907px;top:943px;width:6px;height:37px;background:#c9c9c9"></div>
<div class="abs" style="left:1907px;top:315.5px;width:6px;height:628px;background:#8f8f8f;border-radius:3px"></div>
<div class="abs" style="left:1809px;top:991px;width:88.5px;height:24.5px;background:#e9e9e9;border:1px solid #b9b9b9"></div>
<div class="abs txt" style="left:1814.5px;top:995px;font-size:14.5px;line-height:17px;color:#5a5a5a">Stop Sketch</div>
<div class="abs psec" style="top:323.7px">Options</div>
<div class="abs psec" style="top:611.7px">Constraints</div>
<div class="abs prow" style="top:355.8px">Look At</div>
<div class="abs prow" style="top:387.8px">Sketch Grid</div>
<div class="abs prow" style="top:419.8px">Snap</div>
<div class="abs prow" style="top:451.8px">Slice</div>
<div class="abs prow" style="top:483.8px">Show Profile</div>
<div class="abs prow" style="top:515.8px">Show Points</div>
<div class="abs prow" style="top:547.8px">Show Constraints</div>
<div class="abs prow" style="top:579.8px">3D Sketch</div>
<div class="abs prow" style="top:643.8px">Coincident</div>
<div class="abs prow" style="top:675.8px">Colinear</div>
<div class="abs prow" style="top:707.8px">Concentric</div>
<div class="abs prow" style="top:739.8px">Midpoint</div>
<div class="abs prow" style="top:771.8px">Fix/UnFix</div>
<div class="abs prow" style="top:803.8px">Parallel</div>
<div class="abs prow" style="top:835.8px">Perpendicular</div>
<div class="abs prow" style="top:867.8px">Horizontal/Vertical</div>
<div class="abs prow" style="top:899.8px">Tangent</div>
<div class="abs prow" style="top:931.8px">Smooth</div>
<div class="abs prow" style="top:963.8px">Equal</div>
<div class="abs cb on" style="top:386.5px"></div>
<div class="abs cb on" style="top:418.5px"></div>
<div class="abs cb" style="top:450.5px"></div>
<div class="abs cb on" style="top:482.5px"></div>
<div class="abs cb on" style="top:514.5px"></div>
<div class="abs cb on" style="top:546.5px"></div>
<div class="abs cb" style="top:578.5px"></div>
<svg id="picons" style="left:1600px;top:290px" width="320" height="700" viewBox="1600 290 320 700">
<path d="M1606.2 298 V307" stroke="#8a8a8a" stroke-width="1"/><path d="M1608.3 297 V308" stroke="#666" stroke-width="1"/>
<circle cx="1620.4" cy="302.3" r="4.6" fill="#1f1f1f"/><path d="M1618 302.3 H1622.8" stroke="#fff" stroke-width="1.4"/>
<path d="M1901 299.8 V306.4 L1905.6 303.1 Z M1906.2 299.8 V306.4 L1910.8 303.1 Z" fill="#2b2b2b"/>
<path d="M1607.6 327.2 H1616.6 L1612.1 334.6 Z" fill="#2b2b2b"/>
<path d="M1607.6 615.2 H1616.6 L1612.1 622.6 Z" fill="#2b2b2b"/>
<path d="M1742.6 395.6 L1745.6 399.6 L1751.8 389.8" fill="none" stroke="#1d1d1d" stroke-width="2"/>
<path d="M1742.6 427.6 L1745.6 431.6 L1751.8 421.8" fill="none" stroke="#1d1d1d" stroke-width="2"/>
<path d="M1742.6 491.6 L1745.6 495.6 L1751.8 485.8" fill="none" stroke="#1d1d1d" stroke-width="2"/>
<path d="M1742.6 523.6 L1745.6 527.6 L1751.8 517.8" fill="none" stroke="#1d1d1d" stroke-width="2"/>
<path d="M1742.6 555.6 L1745.6 559.6 L1751.8 549.8" fill="none" stroke="#1d1d1d" stroke-width="2"/>
<path d="M1741 361.6 L1744.6 355.8 L1746 357.6 L1749 356.2 L1750 357.4 L1752 355.6 L1752.8 361.6" fill="none" stroke="#5a5a5a" stroke-width=".9"/>
<rect x="1739.5" y="361.7" width="15.2" height="9" rx="1.2" fill="#fff" stroke="#3a3f55" stroke-width="1.1"/><rect x="1742.8" y="364.4" width="8.6" height="3.6" fill="#c5cbe0" stroke="#3a3f55" stroke-width=".9"/>
<path d="M1742 646 V655.6 M1742 657.4 H1754" stroke="#2b2b2b" stroke-width="1" fill="none"/><path d="M1740.2 653 L1742 656 L1743.8 653 Z" fill="#2b2b2b"/><rect x="1741.2" y="643" width="1.7" height="1.7" fill="#e02020"/><rect x="1741.2" y="656.4" width="1.7" height="1.7" fill="#e02020"/>
<path d="M1742 690.6 L1748.4 684.4 M1739.4 682.8 L1744.6 677.8" stroke="#2b2b2b" stroke-width="1"/><path d="M1749.6 683 L1755 677.8" stroke="#c8541a" stroke-width="1.1"/><path d="M1742.4 681.6 L1746 685" stroke="#2b2b2b" stroke-width="1"/><path d="M1746.8 685.8 L1743.6 685 L1746 682.8 Z" fill="#2b2b2b"/>
<circle cx="1747" cy="715" r="7.2" fill="none" stroke="#e02020" stroke-width="1.3"/><circle cx="1747" cy="715" r="4.2" fill="none" stroke="#3a3f4a" stroke-width="1.3"/>
<path d="M1747 741.2 L1753.4 753.4 H1740.6 Z" fill="none" stroke="#e02020" stroke-width="1.2"/>
<path d="M1743.8 777.6 V775.8 Q1743.8 772.8 1746.9 772.8 Q1750 772.8 1750 775.8 V777.6" fill="none" stroke="#c8541a" stroke-width="1.4"/><rect x="1741.8" y="777.4" width="10.2" height="8" rx="1.2" fill="#f1c6b0" stroke="#c8541a" stroke-width="1.3"/><path d="M1746.9 779.6 V783.4" stroke="#c8541a" stroke-width="1.3"/>
<path d="M1740.2 815.4 L1751 805.2" stroke="#2b3040" stroke-width="1.1"/><path d="M1743.4 818 L1754 807.8" stroke="#c8541a" stroke-width="1.1"/>
<path d="M1746 845.4 L1754 836" stroke="#2b3040" stroke-width="1.1"/><path d="M1740.4 842.8 L1747 849.8" stroke="#c8541a" stroke-width="1.1"/>
<path d="M1748 868 V877.6 M1742 878.6 H1751" stroke="#2b3040" stroke-width="1.1"/><path d="M1742.6 868.6 L1745.4 870.2 M1742.6 871.6 L1745.4 873.2 M1742.6 874.6 L1745.4 876.2 M1742.6 882.8 L1744.2 880.4 M1745.6 882.8 L1747.2 880.4 M1748.6 882.8 L1750.2 880.4" stroke="#e02020" stroke-width="1.1"/><path d="M1745.6 868 V877" stroke="#e02020" stroke-width=".8"/><path d="M1742 880.2 H1751" stroke="#e02020" stroke-width=".8"/>
<circle cx="1745" cy="909" r="4.6" fill="none" stroke="#c8541a" stroke-width="1.2"/><path d="M1744 900 L1754 909.6" stroke="#2b2b2b" stroke-width="1"/>
<g fill="none" stroke="#f4f4f4" stroke-width="2.6" stroke-linecap="round"><path d="M1743.6 931.8 L1754.6 941.2"/><path d="M1739.2 934.6 Q1743 936.6 1747 936.8"/><path d="M1749.2 939 Q1749.6 943 1751 946.6"/></g>
<path d="M1743.6 931.8 L1747 935 M1751 938.8 L1754.6 941.2" stroke="#c00000" stroke-width="1.5"/>
<path d="M1739.2 934.6 Q1743 936.6 1747 936.8" fill="none" stroke="#111" stroke-width="1.5"/><path d="M1749.2 939 Q1749.6 943 1751 946.6" fill="none" stroke="#111" stroke-width="1.5"/>
<rect x="1747.1" y="934.9" width="3.8" height="4" fill="#f00808"/>
<path d="M1741 969.2 H1753 M1741 973.2 H1753" stroke="#e02020" stroke-width="1.1"/>
</svg>
<!-- navigation bar -->
<div class="abs" style="left:822px;top:996.3px;width:155px;height:29.3px;background:#cbcbcb"></div>
<div class="abs" style="left:983.5px;top:996.3px;width:114.5px;height:29.3px;background:#cbcbcb"></div>
<svg id="navicons" style="left:820px;top:996px" width="290" height="32" viewBox="820 996 290 32">
 <defs>
  <radialGradient id="lens" cx=".35" cy=".3" r=".8"><stop offset="0" stop-color="#ffffff"/><stop offset="1" stop-color="#b9dbe2"/></radialGradient>
  <linearGradient id="ngr" x1="0" y1="0" x2="0" y2="1"><stop offset="0" stop-color="#3c3c3c"/><stop offset=".5" stop-color="#5a5c66"/><stop offset="1" stop-color="#9a9da8"/></linearGradient>
 </defs>
 <g fill="#2b2b2b">
  <path d="M850.4 1008.3 H856.8 L853.6 1012.8 Z"/><path d="M966 1008.3 H973 L969.5 1012.8 Z"/>
  <path d="M1009.2 1008 H1016.2 L1012.7 1013 Z"/><path d="M1047.2 1008 H1054.2 L1050.7 1013 Z"/><path d="M1085 1008 H1092 L1088.5 1013 Z"/>
 </g>
 <!-- orbit -->
 <path d="M833.4 1009.4 Q827.4 1010 827.4 1012 Q827.4 1014.4 833 1014.6 M837.2 1014.4 Q842.8 1013.8 842.8 1011.6 Q842.8 1009.6 837.2 1009.2" fill="none" stroke="#2b2b2b" stroke-width="1.1"/>
 <path d="M828.8 1014.2 L832.2 1011.8 V1016.8 Z" fill="#2b2b2b"/>
 <path d="M834.3 1018.6 V1006.6 H832.4 L835.2 1002.8 L838 1006.6 H836.1 V1018.6 Z" fill="#fff" stroke="#2b2b2b" stroke-width=".9" stroke-linejoin="round"/>
 <!-- look at -->
 <path d="M866.6 1008.4 L870.4 1003.6 L871.6 1006 L874.4 1004.4 L875.6 1005.8 L877.6 1004 L878.4 1008.4" fill="none" stroke="#555" stroke-width=".9"/>
 <rect x="865.6" y="1008.8" width="15" height="9.8" fill="#f4f4f6" stroke="#3a3f55" stroke-width="1.2"/>
 <rect x="868.6" y="1011.8" width="9" height="3.8" fill="#b9bfd2" stroke="#3a3f55" stroke-width=".9"/>
 <!-- hand -->
 <path d="M894.6 1011.6 L892 1009.4 Q890.6 1009 891.2 1010.6 L895.4 1016.8 Q896.6 1018.6 898.6 1018.6 H902.6 Q904.4 1018.6 905 1016.6 L907 1008.4 Q907 1006.8 905.6 1007.4 L904.4 1010.6 L904.2 1005 Q903.4 1003.6 902.6 1005 L902 1009.6 L901.2 1003.8 Q900.2 1002.6 899.6 1003.8 L899.4 1009.6 L897.8 1004.8 Q896.6 1003.8 896.4 1005.4 L897.4 1011.4 L897 1013.4 Z" fill="#fff" stroke="#2b2b2b" stroke-width=".9" stroke-linejoin="round"/>
 <!-- zoom -->
 <path d="M924 1013.4 L929.4 1017.8" stroke="#3a3a3a" stroke-width="2.4" stroke-linecap="round"/>
 <circle cx="920.8" cy="1009.8" r="4.5" fill="url(#lens)" stroke="#3a3a3a" stroke-width="1.1"/>
 <path d="M928.2 1005.4 H932.8 M930.5 1003 V1007.6 M928.2 1009.6 H932.8" stroke="#2b2b2b" stroke-width="1"/>
 <!-- zoom window -->
 <rect x="944" y="1003.2" width="14.6" height="15.2" fill="none" stroke="#3a3a3a" stroke-width=".9" stroke-dasharray="2 1.6"/>
 <path d="M954 1014.2 L958 1018" stroke="#3a3a3a" stroke-width="2.6" stroke-linecap="round"/>
 <circle cx="949.6" cy="1009.4" r="6.2" fill="url(#lens)" stroke="#3a3a3a" stroke-width="1.2"/>
 <!-- display -->
 <path d="M994.6 1016 H999.6 L1000.6 1018.6 H993.6 Z" fill="#fff" stroke="#2b2b2b" stroke-width=".8"/>
 <rect x="989.4" y="1003.4" width="15.4" height="12.6" rx="1.2" fill="#f6f6f6" stroke="#2b2b2b" stroke-width="1"/>
 <rect x="991.6" y="1005.6" width="11" height="8.2" rx="1" fill="#a9c6ea" stroke="#1e3c78" stroke-width="1"/>
 <!-- grid -->
 <rect x="1027.2" y="1003.4" width="15.6" height="15.4" rx="1" fill="url(#ngr)" stroke="#333" stroke-width=".8"/>
 <g fill="#fff"><path d="M1028.4 1004.6h1.9v1.9h-1.9zM1031.4 1004.6h1.9v1.9h-1.9zM1034.4 1004.6h1.9v1.9h-1.9zM1037.4 1004.6h1.9v1.9h-1.9zM1040.4 1004.6h1.9v1.9h-1.9zM1028.4 1007.6h1.9v1.9h-1.9zM1031.4 1007.6h1.9v1.9h-1.9zM1034.4 1007.6h1.9v1.9h-1.9zM1037.4 1007.6h1.9v1.9h-1.9zM1040.4 1007.6h1.9v1.9h-1.9zM1028.4 1010.6h1.9v1.9h-1.9zM1031.4 1010.6h1.9v1.9h-1.9zM1034.4 1010.6h1.9v1.9h-1.9zM1037.4 1010.6h1.9v1.9h-1.9zM1040.4 1010.6h1.9v1.9h-1.9zM1028.4 1013.6h1.9v1.9h-1.9zM1031.4 1013.6h1.9v1.9h-1.9zM1034.4 1013.6h1.9v1.9h-1.9zM1037.4 1013.6h1.9v1.9h-1.9zM1040.4 1013.6h1.9v1.9h-1.9zM1028.4 1016.6h1.9v1.6h-1.9zM1031.4 1016.6h1.9v1.6h-1.9zM1034.4 1016.6h1.9v1.6h-1.9zM1037.4 1016.6h1.9v1.6h-1.9zM1040.4 1016.6h1.9v1.6h-1.9z"/></g>
 <!-- viewports -->
 <g fill="#a9c6ea" stroke="#24468c" stroke-width="1.3"><rect x="1065.6" y="1004.6" width="6.6" height="5.4" rx=".8"/><rect x="1072.8" y="1004.6" width="6.6" height="5.4" rx=".8"/><rect x="1065.6" y="1010.8" width="6.6" height="5.4" rx=".8"/><rect x="1072.8" y="1010.8" width="6.6" height="5.4" rx=".8"/></g>
</svg>
<!-- bottom timeline bar -->
<div class="abs" style="left:0;top:1029px;width:1920px;height:27px;background:#cdcdcd"></div>
<svg id="tlicons" style="left:0;top:1029px" width="1920" height="27" viewBox="0 1029 1920 27">
 <g fill="#444">
  <path d="M11 1045 H12.8 V1059 H11 Z M23 1045 V1059 L13.2 1052 Z"/>
  <path d="M45 1045.6 V1058.4 L35.6 1052 Z M46.2 1048.8 H48 V1055.2 H46.2 Z"/>
  <path d="M63 1045.6 V1058.4 L72.4 1052 Z M60 1048.8 H61.8 V1055.2 H60 Z"/>
  <path d="M86.2 1044.4 V1059.6 L97.6 1052 Z"/>
  <path d="M111.2 1045 V1059 L120.8 1052 Z M121.2 1045 H123 V1059 H121.2 Z"/>
 </g>
 <rect x="146.6" y="1045.4" width="15" height="14" fill="#e8f0fa" stroke="#111" stroke-width="1.2"/>
 <path d="M149.6 1047.6 V1057" stroke="#222" stroke-width="1"/>
 <path d="M151.6 1056 L158.6 1046.6 L161.8 1048.6 L154.4 1057.6 Z" fill="#f6c21c" stroke="#8a5a10" stroke-width=".6"/>
 <path d="M160 1039 H172.2 V1042.4 L167.4 1047.4 V1057 H165 V1047.4 L160 1042.4 Z" fill="#666"/>
 <g transform="translate(1902.5 1050.5)"><path d="M-1.4 -7.4 H1.4 L1.9 -5.4 L3.8 -4.6 L5.6 -5.7 L7.4 -3.8 L5.8 -2 L6 -1 L7.4 0 V1.4 L6 2 L5.8 3.2 L7.4 3.8 L5.6 5.7 L3.8 4.6 L1.9 5.4 L1.4 7.4 H-1.4 L-1.9 5.4 L-3.8 4.6 L-5.6 5.7 L-7.4 3.8 L-5.8 2 L-6 1 L-7.4 0 V-1.4 L-6 -2 L-5.8 -3.2 L-7.4 -3.8 L-5.6 -5.7 L-3.8 -4.6 L-1.9 -5.4 Z" fill="#555"/><circle r="2.6" fill="#cdcdcd"/></g>
</svg>
</div>
</body>
</html>
